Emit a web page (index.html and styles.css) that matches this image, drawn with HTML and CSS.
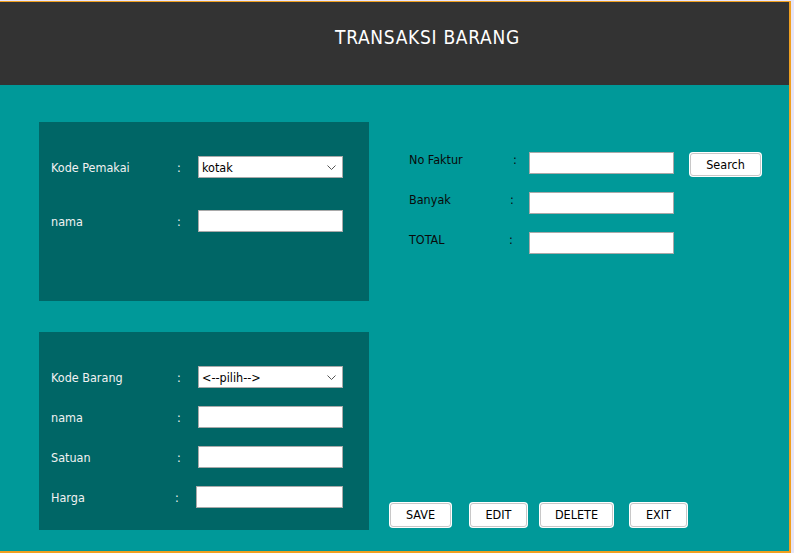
FILE: index.html
```html
<!DOCTYPE html>
<html>
<head>
<meta charset="utf-8">
<title>Transaksi Barang</title>
<link rel="stylesheet" href="styles.css">
</head>
<body>
<div class="frame">
  <header class="header">
    <h1 class="title">TRANSAKSI BARANG</h1>
  </header>
  <main class="main">
    <div class="left">
      <section class="panel panel-user">
        <div class="row">
          <span class="label">Kode Pemakai</span>
          <span class="colon">:</span>
          <div class="select"><span>kotak</span><svg class="chev" width="9" height="5" viewBox="0 0 9 5"><path d="M0.5 0.5 L4.5 4.5 L8.5 0.5" fill="none" stroke="#555" stroke-width="1"/></svg></div>
        </div>
        <div class="row row-gap-lg">
          <span class="label">nama</span>
          <span class="colon">:</span>
          <input class="field" type="text">
        </div>
      </section>
      <section class="panel panel-item">
        <div class="row">
          <span class="label">Kode Barang</span>
          <span class="colon">:</span>
          <div class="select"><span>&lt;--pilih--&gt;</span><svg class="chev" width="9" height="5" viewBox="0 0 9 5"><path d="M0.5 0.5 L4.5 4.5 L8.5 0.5" fill="none" stroke="#555" stroke-width="1"/></svg></div>
        </div>
        <div class="row">
          <span class="label">nama</span>
          <span class="colon">:</span>
          <input class="field" type="text">
        </div>
        <div class="row">
          <span class="label">Satuan</span>
          <span class="colon">:</span>
          <input class="field" type="text">
        </div>
        <div class="row row-harga">
          <span class="label">Harga</span>
          <span class="colon">:</span>
          <input class="field" type="text">
        </div>
      </section>
    </div>
    <div class="right">
      <div class="form">
        <div class="rrow rrow-faktur">
          <span class="rlabel">No Faktur</span>
          <span class="rcolon">:</span>
          <input class="field" type="text">
          <button class="btn btn-search">Search</button>
        </div>
        <div class="rrow rrow-banyak">
          <span class="rlabel">Banyak</span>
          <span class="rcolon">:</span>
          <input class="field" type="text">
        </div>
        <div class="rrow rrow-total">
          <span class="rlabel">TOTAL</span>
          <span class="rcolon">:</span>
          <input class="field" type="text">
        </div>
      </div>
      <div class="actions">
        <button class="btn btn-save">SAVE</button>
        <button class="btn btn-edit">EDIT</button>
        <button class="btn btn-delete">DELETE</button>
        <button class="btn btn-exit">EXIT</button>
      </div>
    </div>
  </main>
</div>
</body>
</html>
```

FILE: styles.css
```css
html, body {
  margin: 0;
  padding: 0;
}
body {
  background: #e8e6f8;
  font-family: "DejaVu Sans Condensed", "DejaVu Sans", sans-serif;
  font-size: 12.5px;
}
.frame {
  margin-top: 1px;
  width: 789px;
  border-top: 1px solid #f0a020;
  border-right: 2px solid #f0a020;
  border-bottom: 2px solid #f0a020;
  background: #009999;
}
.header {
  background: #333333;
  height: 83px;
  box-sizing: border-box;
  padding: 26px 0 0 335px;
}
.title {
  margin: 0;
  font-family: "DejaVu Sans Condensed", sans-serif;
  font-weight: normal;
  font-size: 19px;
  line-height: 19px;
  color: #ffffff;
  letter-spacing: 0.7px;
}
.main {
  display: flex;
  gap: 20px;
  padding: 37px 0 20px 39px;
  height: 466px;
  box-sizing: border-box;
}
.left {
  width: 330px;
  display: flex;
  flex-direction: column;
  gap: 31px;
}
.panel {
  background: #006666;
  box-sizing: border-box;
  padding: 34px 0 0 12px;
  display: flex;
  flex-direction: column;
  gap: 18px;
}
.panel-user {
  height: 179px;
}
.panel-user .row-gap-lg {
  margin-top: 14px;
}
.panel-item {
  height: 198px;
}
.row {
  display: grid;
  grid-template-columns: 126px 21px 145px;
  align-items: center;
  height: 22px;
  color: #f2f2f2;
}
.row .label, .row .colon {
  padding-top: 1px;
}
.row-harga {
  grid-template-columns: 124px 21px 147px;
}
.label, .rlabel {
  white-space: nowrap;
}
.field {
  box-sizing: border-box;
  height: 22px;
  width: 100%;
  margin: 0;
  border: 1px solid #a9a9a9;
  background: #ffffff;
  padding: 0 3px;
  font: inherit;
  outline: none;
}
.select {
  box-sizing: border-box;
  height: 22px;
  border: 1px solid #a9a9a9;
  background: #ffffff;
  color: #000000;
  padding: 0 4px 0 3px;
  display: flex;
  align-items: center;
  justify-content: space-between;
  font-family: "DejaVu Sans Condensed", sans-serif;
  font-size: 12.5px;
}
.chev {
  display: block;
  margin-right: 2px;
}
.right {
  display: flex;
  flex-direction: column;
  width: 380px;
}
.form {
  margin-top: 30px;
  padding-left: 20px;
  display: flex;
  flex-direction: column;
  gap: 18px;
}
.rrow {
  display: grid;
  align-items: start;
  height: 22px;
  color: #0a0a0a;
}
.rrow .rlabel, .rrow .rcolon {
  line-height: 16px;
}
.rrow-faktur {
  grid-template-columns: 104px 16px 145px 74px;
}
.rrow-faktur .btn-search {
  margin-left: 16px;
}
.rrow-banyak {
  grid-template-columns: 101px 19px 145px;
}
.rrow-total {
  grid-template-columns: 100px 20px 145px;
}
.btn {
  box-sizing: border-box;
  height: 24px;
  margin: 1px;
  border: 1px solid #c8c8c8;
  border-radius: 3px;
  background: #ffffff;
  box-shadow: 0 0 0 1px #ffffff;
  color: #000000;
  font-family: "DejaVu Sans Condensed", sans-serif;
  font-size: 12.5px;
  padding: 0 0 1px 0;
  cursor: pointer;
}
.btn-search {
  width: 71px;
  height: 23px;
}
.actions {
  margin-top: auto;
  margin-bottom: 3px;
  display: flex;
}
.btn-save { width: 61px; }
.btn-edit { width: 57px; margin-left: 18px; }
.btn-delete { width: 73px; margin-left: 12px; }
.btn-exit { width: 57px; margin-left: 16px; }
```
